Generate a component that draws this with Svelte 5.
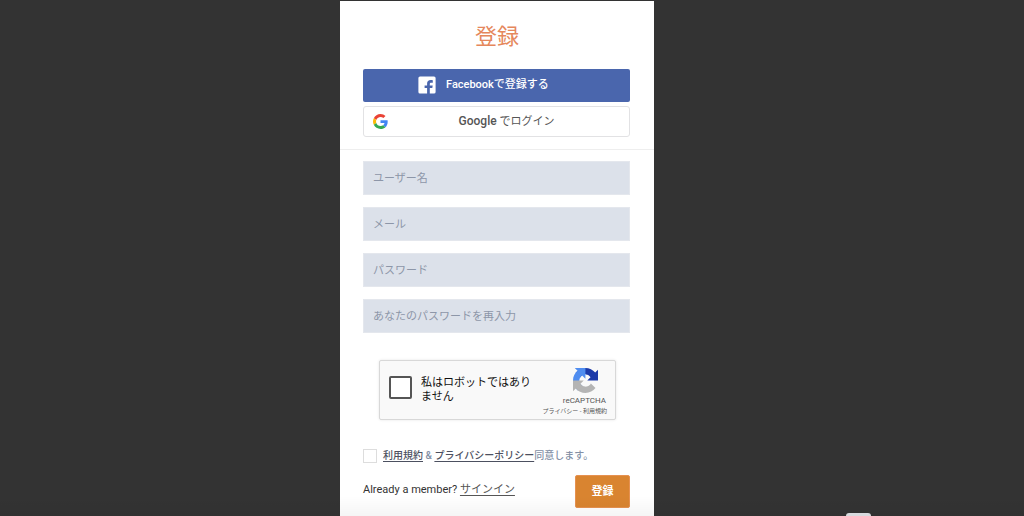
<script>
  const fields = [
    { id: 'username', type: 'text', label: 'ユーザー名' },
    { id: 'email', type: 'email', label: 'メール' },
    { id: 'password', type: 'password', label: 'パスワード' },
    { id: 'confirm', type: 'password', label: 'あなたのパスワードを再入力' }
  ];
</script>

<div class="page">
  <main class="card">
    <h1>登録</h1>

    <div class="social">
      <button type="button" class="facebook">
        <svg viewBox="0 0 18 18" width="18" height="18" aria-hidden="true">
          <path fill="#fff" d="M2 0.500h14a1.600 1.600 0 0 1 1.600 1.600v13.800a1.600 1.600 0 0 1-1.600 1.600h-4.200v-5.600h2.500l.4-2.300h-2.900V8c0-.8.4-1.300 1.400-1.300h1.600V4.200c-.6-.1-1.300-.2-2-.2-2.400 0-3.700 1.300-3.700 3.600v2H6.600v2.300h2.500v5.600H2A1.600 1.600 0 0 1 .4 15.900V2.100A1.600 1.600 0 0 1 2 .5z" />
        </svg>
        <span>Facebookで登録する</span>
      </button>
      <button type="button" class="google">
        <svg viewBox="0 0 48 48" width="15" height="15" aria-hidden="true">
          <path fill="#EA4335" d="M24 9.500c3.540 0 6.710 1.220 9.210 3.600l6.850-6.850C35.900 2.380 30.470 0 24 0 14.620 0 6.510 5.380 2.560 13.220l7.980 6.190C12.430 13.720 17.740 9.500 24 9.500z" />
          <path fill="#4285F4" d="M46.980 24.550c0-1.570-.15-3.090-.38-4.550H24v9.020h12.940c-.58 2.960-2.260 5.480-4.780 7.180l7.730 6c4.510-4.180 7.090-10.360 7.090-17.650z" />
          <path fill="#FBBC05" d="M10.530 28.590c-.48-1.450-.76-2.990-.76-4.590s.27-3.140.76-4.590l-7.980-6.190C.92 16.460 0 20.120 0 24s.92 7.540 2.560 10.780l7.970-6.190z" />
          <path fill="#34A853" d="M24 48c6.480 0 11.930-2.130 15.890-5.810l-7.730-6c-2.150 1.450-4.920 2.300-8.160 2.300-6.260 0-11.570-4.220-13.470-9.910l-7.980 6.190C6.510 42.620 14.620 48 24 48z" />
        </svg>
        <span><b>Google</b> でログイン</span>
      </button>
    </div>

    <form onsubmit={(e) => e.preventDefault()}>
      <div class="fields">
        {#each fields as field}
          <input id={field.id} type={field.type} placeholder={field.label} aria-label={field.label} />
        {/each}
      </div>

      <div class="captcha">
        <input id="robot" type="checkbox" />
        <label for="robot">私はロボットではありません</label>
        <div class="brand">
          <svg viewBox="0 0 64 64" width="25" height="25" aria-hidden="true">
            <path fill="#1C3AA9" d="M64 31.955a33.420 33.420 0 0 0-.016-1.375V4.594l-7.184 7.184C50.920 4.580 41.978 0 31.966 0 21.547 0 12.290 4.961 6.452 12.644L18.228 24.544a15.600 15.600 0 0 1 4.771-5.353c2.057-1.605 4.971-2.918 8.966-2.918.483 0 .855.056 1.129.162 4.950.391 9.241 3.123 11.768 7.088l-8.336 8.336z" />
            <path fill="#4F8DF0" d="M31.862.004c-.461.002-.919.007-1.375.015H4.501l7.184 7.184C4.487 13.083 0 22.025 0 32.037c0 10.419 4.961 19.676 12.551 25.514L24.451 45.775a15.600 15.600 0 0 1-5.353-4.771c-1.605-2.057-2.918-4.971-2.918-8.966 0-.483.056-.855.162-1.129.391-4.950 3.123-9.241 7.088-11.768l8.336 8.336z" />
            <path fill="#B4B4B4" d="M0 32.045c.002.461.007.919.015 1.375v25.986l7.184-7.184C13.080 59.420 22.021 64 32.034 64c10.419 0 19.676-4.961 25.514-12.644L45.772 39.456a15.600 15.600 0 0 1-4.771 5.353c-2.057 1.605-4.971 2.918-8.966 2.918-.483 0-.855-.056-1.129-.162-4.950-.391-9.241-3.123-11.768-7.088l8.336-8.336z" />
          </svg>
          <strong>reCAPTCHA</strong>
          <small><a href="#privacy">プライバシー</a> - <a href="#terms">利用規約</a></small>
        </div>
      </div>

      <div class="agree">
        <input id="agree" type="checkbox" />
        <label for="agree"><a href="#terms">利用規約</a> &amp; <a href="#privacy">プライバシーポリシー</a>同意します。</label>
      </div>

      <div class="bottom">
        <p>Already a member? <a href="#signin">サインイン</a></p>
        <button type="submit">登録</button>
      </div>
    </form>
  </main>
  <div class="shade"></div>
  <div class="handle"></div>
</div>

<style>
  :global(body) {
    margin: 0;
    background: #333;
  }
  .page {
    position: relative;
    box-sizing: border-box;
    min-height: 100vh;
    padding-top: 1px;
    overflow: hidden;
    display: flex;
    justify-content: center;
    background: #333;
    font-family: Roboto, "Noto Sans CJK JP", sans-serif;
    font-size: 11px;
    line-height: 16px;
    color: #333;
  }
  .page * {
    box-sizing: border-box;
  }
  .card {
    width: 100%;
    max-width: 314px;
    margin-right: 30px;
    background: #fff;
  }
  button,
  input {
    font: inherit;
    margin: 0;
  }
  h1 {
    margin: 21px 0 0;
    text-align: center;
    font-size: 22px;
    line-height: 30px;
    font-weight: 400;
    color: #e5875c;
  }
  .social {
    display: flex;
    flex-direction: column;
    gap: 4px;
    padding: 17px 24px 12px 23px;
    border-bottom: 1px solid #eee;
  }
  .facebook {
    display: flex;
    align-items: center;
    gap: 10px;
    height: 33px;
    padding: 0 0 2px 55px;
    border: 0;
    border-radius: 2px;
    background: #4a66ad;
    color: #fff;
    font-weight: 500;
  }
  .google {
    display: flex;
    align-items: center;
    height: 31px;
    padding: 0 9px;
    border: 1px solid #e2e2e4;
    border-radius: 3px;
    background: #fff;
    color: #555;
  }
  .google span {
    flex: 1;
    padding-left: 5px;
    text-align: center;
  }
  .google b {
    font-weight: 500;
    font-size: 12px;
  }
  form {
    padding: 11px 24px 8px 23px;
  }
  .fields {
    display: grid;
    gap: 12px;
  }
  .fields input {
    width: 100%;
    height: 34px;
    padding: 0 9px;
    border: 1px solid #e4e7ed;
    border-radius: 0;
    background: #dce1ea;
    color: #333;
  }
  .fields input::placeholder {
    color: #8d96a8;
    opacity: 1;
  }
  .captcha {
    display: flex;
    align-items: center;
    height: 60px;
    margin: 27px 14px 0 16px;
    padding: 0 8px 0 9px;
    border: 1px solid #d8d8d8;
    border-radius: 2px;
    background: #f9f9f9;
    box-shadow: 0 0 3px rgba(0, 0, 0, 0.1);
  }
  input[type='checkbox'] {
    appearance: none;
    flex: none;
    background: #fff;
  }
  .captcha input {
    width: 23px;
    height: 23px;
    margin-bottom: 6px;
    border: 2px solid #555;
    border-radius: 2px;
  }
  .captcha label {
    width: 112px;
    margin-left: 9px;
    line-height: 14px;
    color: #111;
  }
  .brand {
    flex: 1;
    display: flex;
    flex-direction: column;
    align-items: flex-end;
    padding-top: 4px;
    white-space: nowrap;
    color: #555;
  }
  .brand svg {
    margin-right: 9px;
  }
  .brand strong {
    margin: 3px 1px 0 0;
    font-size: 8px;
    line-height: 10px;
    font-weight: 400;
  }
  .brand small {
    font-size: 6px;
    line-height: 10px;
  }
  .brand a {
    color: inherit;
    text-decoration: none;
  }
  .agree {
    display: flex;
    align-items: center;
    gap: 6px;
    margin-top: 28px;
    color: #8390a6;
    font-size: 10px;
    font-weight: 500;
  }
  .agree input {
    width: 14px;
    height: 14px;
    border: 1px solid #ddd;
  }
  .agree a {
    color: #4c5060;
  }
  a {
    text-underline-offset: 2px;
  }
  .bottom {
    display: flex;
    justify-content: space-between;
    margin-top: 11px;
  }
  .bottom p {
    margin: 7px 0 0;
  }
  .bottom a {
    color: #555;
  }
  .bottom button {
    width: 55px;
    height: 33px;
    padding: 0;
    border: 1px solid #e69150;
    border-radius: 2px;
    background: #d98430;
    color: #fff;
    font-weight: 700;
  }
  .shade {
    position: absolute;
    inset: auto 0 0;
    height: 20px;
    background: linear-gradient(transparent, rgba(0, 0, 0, 0.04));
    pointer-events: none;
  }
  .handle {
    position: absolute;
    left: 846px;
    bottom: 0;
    width: 25px;
    height: 3px;
    border-radius: 5px 5px 0 0;
    background: #d8dade;
  }
</style>
